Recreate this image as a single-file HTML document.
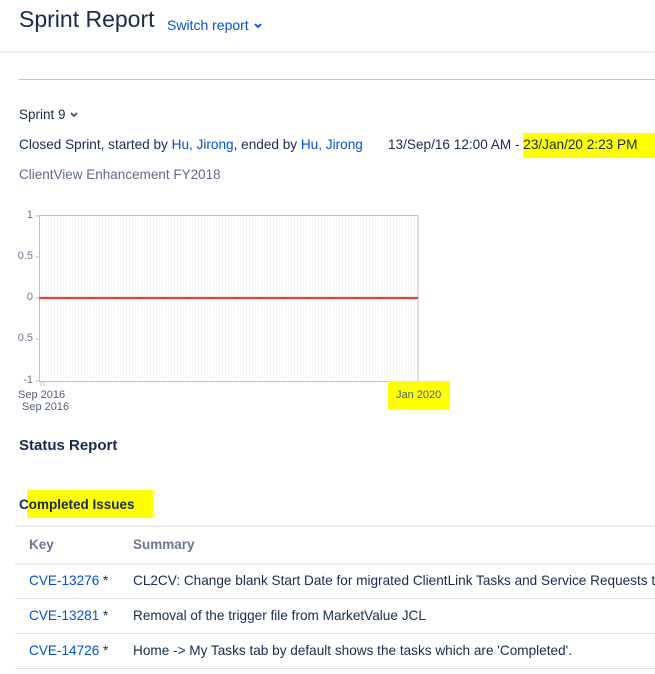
<!DOCTYPE html>
<html><head><style>
body{margin:0;width:655px;height:674px;overflow:hidden;background:#fff;font-family:"Liberation Sans",sans-serif;color:#172b4d;position:relative}
.a{position:absolute;white-space:nowrap}
.b{color:#0052cc}
.hl{position:absolute;background:#ffff00}
.l{position:absolute;height:1px;background:#dfe1e6}
.yl{position:absolute;right:622px;font-size:11px;color:#6b778c;text-align:right}
</style></head><body>
<div class="a" style="left:19px;top:6px;font-size:23px;color:#172b4d">Sprint Report</div>
<div class="a b" style="left:167px;top:17px;font-size:14px">Switch report <svg width="10" height="8" viewBox="0 0 10 8"><path d="M2 2l3 3 3-3" stroke="#0052cc" stroke-width="1.8" fill="none"/></svg></div>
<div style="position:absolute;left:0;top:51px;width:655px;height:2px;background:#ebecf0"></div>
<div style="position:absolute;left:19px;top:79px;width:636px;height:1px;background:#c1c7d0"></div>
<div class="a" style="left:19px;top:107px;font-size:13.5px">Sprint 9 <svg width="10" height="8" viewBox="0 0 10 8"><path d="M2 2l3 3 3-3" stroke="#42526e" stroke-width="1.8" fill="none"/></svg></div>
<div class="hl" style="left:523px;top:133px;width:132px;height:25px"></div>
<div class="a" style="left:19px;top:137px;font-size:13.6px">Closed Sprint, started by <span class="b">Hu, Jirong</span>, ended by <span class="b">Hu, Jirong</span></div>
<div class="a" style="left:388px;top:137px;font-size:13.6px">13/Sep/16 12:00 AM - 23/Jan/20 2:23 PM</div>
<div class="a" style="left:19px;top:167px;font-size:13.5px;color:#5e6c84">ClientView Enhancement FY2018</div>
<svg style="position:absolute;left:0;top:0" width="655" height="420">
<defs><pattern id="g" width="3" height="10" patternUnits="userSpaceOnUse"><rect x="0" width="1" height="10" fill="#f6f6f6"/></pattern></defs>
<rect x="39" y="215" width="379" height="166" fill="url(#g)"/>
<rect x="39.5" y="215.5" width="378.5" height="166" fill="none" stroke="#c0c0c0"/>
<g stroke="#c0c0c0"><line x1="35" y1="216" x2="39" y2="216"/><line x1="35" y1="257" x2="39" y2="257"/><line x1="35" y1="298" x2="39" y2="298"/><line x1="35" y1="339" x2="39" y2="339"/><line x1="35" y1="381" x2="39" y2="381"/><line x1="41" y1="381" x2="41" y2="386"/><line x1="44" y1="381" x2="44" y2="386"/></g>
<line x1="39" y1="298" x2="418" y2="298" stroke="#e0453a" stroke-width="2.2"/>
</svg>
<div class="yl" style="top:209px">1</div>
<div class="yl" style="top:250px">0.5</div>
<div class="yl" style="top:291px">0</div>
<div class="yl" style="top:332px">0.5</div>
<div class="yl" style="top:374px">-1</div>
<div class="a" style="left:18px;top:389px;font-size:11px;color:#505f79">Sep 2016</div>
<div class="a" style="left:22px;top:401px;font-size:11px;color:#505f79">Sep 2016</div>
<div class="hl" style="left:388px;top:381px;width:62px;height:29px"></div>
<div class="a" style="left:396px;top:389px;font-size:11px;color:#505f79">Jan 2020</div>
<div class="a" style="left:19px;top:437px;font-size:15px;font-weight:bold">Status Report</div>
<div class="hl" style="left:27px;top:490px;width:126px;height:28px"></div>
<div class="a" style="left:19px;top:497px;font-size:13.5px;font-weight:bold;color:#172b4d">Completed Issues</div>
<div class="l" style="left:15px;top:525px;width:640px;height:2px;background:#ebecf0"></div>
<div class="a" style="left:29px;top:537px;font-size:13.5px;color:#6b778c;font-weight:bold">Key</div>
<div class="a" style="left:133px;top:537px;font-size:13.5px;color:#6b778c;font-weight:bold">Summary</div>
<div class="l" style="left:15px;top:563px;width:640px;height:2px;background:#ebecf0"></div>
<div class="a" style="left:29px;top:573px;font-size:13.6px"><span class="b">CVE-13276</span> *</div>
<div class="a" style="left:133px;top:573px;font-size:13.6px">CL2CV: Change blank Start Date for migrated ClientLink Tasks and Service Requests to</div>
<div class="l" style="left:15px;top:598px;width:640px"></div>
<div class="a" style="left:29px;top:608px;font-size:13.6px"><span class="b">CVE-13281</span> *</div>
<div class="a" style="left:133px;top:608px;font-size:13.6px">Removal of the trigger file from MarketValue JCL</div>
<div class="l" style="left:15px;top:633px;width:640px"></div>
<div class="a" style="left:29px;top:643px;font-size:13.6px"><span class="b">CVE-14726</span> *</div>
<div class="a" style="left:133px;top:643px;font-size:13.6px">Home -&gt; My Tasks tab by default shows the tasks which are 'Completed'.</div>
<div class="l" style="left:15px;top:668px;width:640px"></div>
</body></html>
